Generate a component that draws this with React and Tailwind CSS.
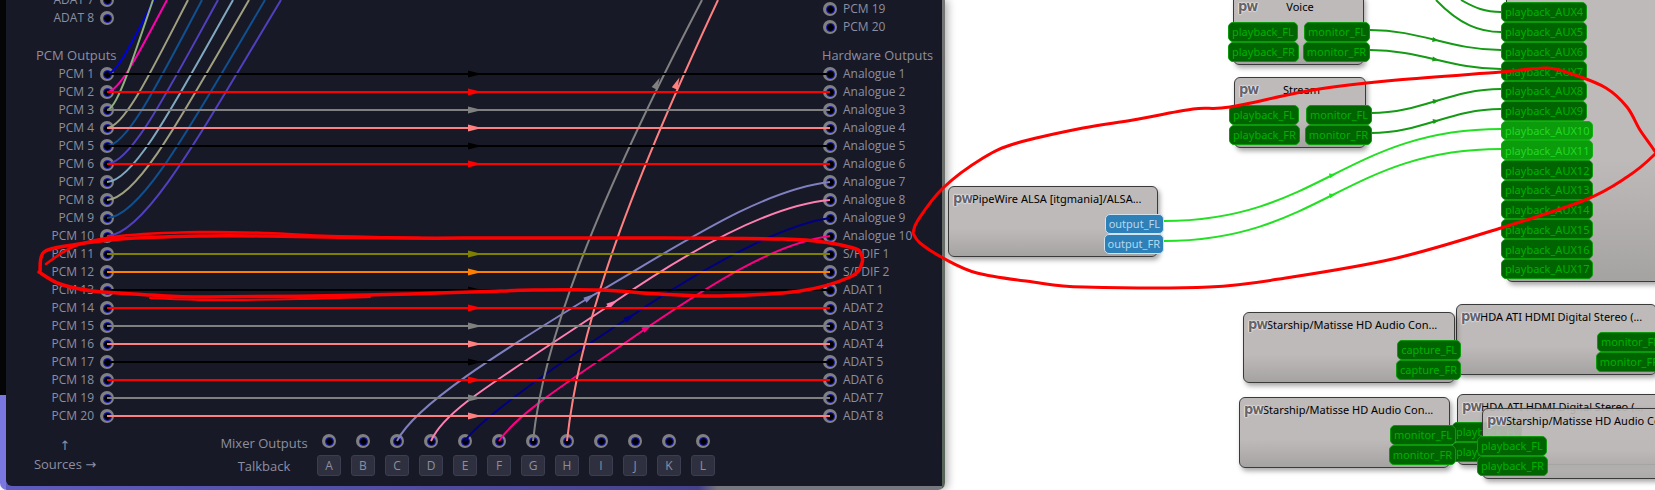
import React from "react";

const FONT = "font-['Open_Sans',sans-serif]";
const NODE_FONT = "font-['Noto_Sans',sans-serif]";

const leftTop = ["ADAT 7", "ADAT 8"];
const pcm = Array.from({ length: 20 }, (_, i) => `PCM ${i + 1}`);
const rightTop = ["PCM 19", "PCM 20"];
const hw = [
  ...Array.from({ length: 10 }, (_, i) => `Analogue ${i + 1}`),
  "S/PDIF 1",
  "S/PDIF 2",
  ...Array.from({ length: 8 }, (_, i) => `ADAT ${i + 1}`),
];
const talkback = ["A", "B", "C", "D", "E", "F", "G", "H", "I", "J", "K", "L"];

// row colours of the straight routes, null where the source goes elsewhere
const straight = [
  "#000000", "#ff0000", "#808080", "#ff8080", "#000000", "#ff0000",
  null, null, null, null,
  "#808000", "#ff8000", "#000000", "#ff0000", "#808080", "#ff8080",
  "#000000", "#ff0000", "#808080", "#ff8080",
];

const pcmCurves = [
  ["#0000e0", 74, 154],
  ["#ff00b0", 92, 167],
  ["#90b080", 110, 153],
  ["#a0a080", 128, 188],
  ["#105090", 146, 202],
  ["#5040c0", 164, 218],
  ["#80a8c0", 182, 233],
  ["#a0a080", 200, 249],
  ["#105090", 218, 265],
  ["#5040c0", 236, 281],
];

const mixerCurves = [
  ["#8080c0", "M397 441C415 405 500 352 590 297C680 245 760 190 830 182", 590, 297, -32],
  ["#ff80b0", "M431 441C445 410 490 385 613 303C690 250 770 205 830 200", 613, 303, -32],
  ["#000080", "M465 441C475 425 540 375 630 317C700 270 780 225 830 218", 630, 317, -33],
  ["#ff0080", "M499 441C520 410 580 375 648 327C710 285 775 243 830 236", 648, 327, -33],
  ["#808080", "M533 441C543 345 590 215 702 0", 657, 83, -63],
  ["#ff8080", "M567 441C578 340 615 220 718 0", 677, 83, -66],
];

const graphWires = [
  ["#149a14", 1370, 30, 1501, 50],
  ["#149a14", 1370, 50, 1501, 69],
  ["#149a14", 1371, 113, 1501, 89],
  ["#149a14", 1371, 133, 1501, 109],
  ["#22e022", 1164, 221, 1501, 129],
  ["#22e022", 1164, 241, 1501, 149],
];

const panelScribble = [
  [40, 272], [44, 252], [73, 245], [120, 239], [200, 236], [267, 236], [400, 238], [500, 238],
  [633, 238], [783, 239], [830, 243], [853, 248], [860, 252], [862, 263], [850, 277], [800, 291],
  [720, 296], [660, 294], [600, 290], [533, 290], [500, 291], [367, 295], [207, 297], [150, 295],
  [93, 291], [60, 284], [39, 272],
];

const panelScribble2 = [
  [46, 264], [75, 246], [120, 236], [200, 232], [267, 233], [330, 236], [420, 238],
];

const panelScribble3 = [
  [150, 298], [210, 300], [300, 299], [370, 297],
];

const graphScribble = [
  [913, 233], [918, 220], [943, 188], [983, 158], [1017, 143], [1083, 128], [1133, 120], [1193, 109],
  [1230, 107], [1313, 90], [1397, 80], [1501, 72], [1547, 68], [1575, 75], [1606, 88], [1627, 107],
  [1640, 130], [1654, 150], [1654, 155], [1627, 177], [1585, 200], [1501, 228], [1397, 258],
  [1292, 277], [1209, 287], [1084, 287], [1033, 282], [977, 273], [943, 258], [920, 243], [913, 233],
];

// catmull-rom through the scribble points
const smooth = (pts) => {
  let d = `M${pts[0][0]} ${pts[0][1]}`;
  for (let i = 0; i < pts.length - 1; i++) {
    const p0 = pts[Math.max(i - 1, 0)];
    const p1 = pts[i];
    const p2 = pts[i + 1];
    const p3 = pts[Math.min(i + 2, pts.length - 1)];
    const c1x = p1[0] + (p2[0] - p0[0]) / 6;
    const c1y = p1[1] + (p2[1] - p0[1]) / 6;
    const c2x = p2[0] - (p3[0] - p1[0]) / 6;
    const c2y = p2[1] - (p3[1] - p1[1]) / 6;
    d += `C${c1x} ${c1y} ${c2x} ${c2y} ${p2[0]} ${p2[1]}`;
  }
  return d;
};

function Jack() {
  return (
    <div className="w-[14px] h-[14px] shrink-0 rounded-full bg-[#808080] flex items-center justify-center">
      <div className="w-[9px] h-[9px] rounded-full bg-black border border-[#1a1ad0]" />
    </div>
  );
}

function LeftRow({ label }) {
  return (
    <div className="h-[18px] flex items-center justify-end gap-[6px]">
      <span className="leading-none">{label}</span>
      <Jack />
    </div>
  );
}

function RightRow({ label }) {
  return (
    <div className="h-[18px] flex items-center gap-[6px]">
      <Jack />
      <span className="leading-none whitespace-nowrap">{label}</span>
    </div>
  );
}

function Panel() {
  return (
    <div className={`flex w-[945px] h-[490px] rounded-b-[7px] overflow-hidden shadow-[3px_0_8px_rgba(0,0,0,0.3)] text-[12px] text-[#8c8fa1] ${FONT}`}>
      <div className="w-[6px] flex flex-col">
        <div className="h-[395px] bg-[#050507]" />
        <div className="flex-1 bg-[#7a78e0]" />
      </div>

      <div className="flex-1 flex flex-col bg-[linear-gradient(to_right,#5f5cc0,#45428c_74%,#77777f_76%)]">
        <div className="h-[486px] bg-[#181926] rounded-bl-[6px]">
          <div className="h-[425px] flex items-start">
            <div className="w-[108px] shrink-0 -mt-[9px]">
              {leftTop.map((l) => (
                <LeftRow key={l} label={l} />
              ))}
              <div className="h-[38px] flex items-end pl-[30px] pb-[1px] whitespace-nowrap text-[13px] leading-[18px]">PCM Outputs</div>
              {pcm.map((l) => (
                <LeftRow key={l} label={l} />
              ))}
            </div>
            <div className="w-[709px] shrink-0" />
            <div className="flex-1">
              {rightTop.map((l) => (
                <RightRow key={l} label={l} />
              ))}
              <div className="h-[29px] flex items-end -ml-[1px] pb-[1px] whitespace-nowrap text-[12.8px] leading-[18px]">Hardware Outputs</div>
              {hw.map((l) => (
                <RightRow key={l} label={l} />
              ))}
            </div>
          </div>

          <div className="pt-[7px] grid grid-cols-[118px_92px_96px_repeat(12,34px)] grid-rows-[18px_21px] gap-y-[5px] items-center">
            <div className="row-span-2 flex flex-col items-center text-[13px] leading-[19px] pt-[1px]">
              <span className="font-['DejaVu_Sans',sans-serif]">↑</span>
              <span className="whitespace-nowrap">
                Sources <span className="font-['DejaVu_Sans',sans-serif]">→</span>
              </span>
            </div>
            <div className="row-span-2" />
            <div className="text-center whitespace-nowrap text-[13px] pt-[6px]">Mixer Outputs</div>
            {talkback.map((t) => (
              <div key={t} className="flex justify-center">
                <Jack />
              </div>
            ))}
            <div className="text-center text-[13px] pt-[2px]">Talkback</div>
            {talkback.map((t) => (
              <div key={t} className="flex justify-center">
                <div className="w-[24px] h-[21px] rounded-[3px] bg-[#2e3040] border border-[#3b3d50] flex items-center justify-center leading-none">
                  {t}
                </div>
              </div>
            ))}
          </div>
        </div>
      </div>

      <div className="w-[3px] bg-[linear-gradient(to_bottom,#757575,#566458)]" />
    </div>
  );
}

function Arrow({ x, y, a, len = 12, wid = 6, color }) {
  return (
    <polygon
      points={`${-len / 2},${-wid / 2} ${len / 2},0 ${-len / 2},${wid / 2}`}
      fill={color}
      transform={`translate(${x} ${y}) rotate(${a})`}
    />
  );
}

function Wires() {
  return (
    <svg className="absolute left-0 top-0" width="1655" height="490" fill="none">
      {pcmCurves.map(([c, y, x1]) => {
        const span = x1 - 107;
        return (
          <path
            key={y}
            d={`M107 ${y}C${107 + span * 0.22} ${y - 1} ${107 + span * 0.55} ${y * 0.55} ${x1} 0`}
            stroke={c}
            strokeWidth="2"
          />
        );
      })}
      {mixerCurves.map(([c, d, x, y, a]) => (
        <g key={d}>
          <path d={d} stroke={c} strokeWidth="2" />
          <Arrow x={x} y={y} a={a} color={c} />
        </g>
      ))}
      {straight.map((c, i) => {
        if (!c) return null;
        const y = 74 + i * 18;
        return (
          <g key={i}>
            <line x1="107" y1={y} x2="830" y2={y} stroke={c} strokeWidth="2" />
            <polygon points={`468,${y - 3.5} 482,${y} 468,${y + 3.5}`} fill={c} />
          </g>
        );
      })}

      <path d="M1436 0C1460 25 1480 32 1501 32" stroke="#149a14" strokeWidth="2" />
      <path d="M1461 0C1475 8 1485 12 1501 12" stroke="#149a14" strokeWidth="2" />
      {graphWires.map(([c, x0, y0, x1, y1]) => {
        const xm = (x0 + x1) / 2;
        const ang = (Math.atan2(y1 - y0, x1 - x0) * 180) / Math.PI;
        return (
          <g key={`${x0}-${y0}`}>
            <path d={`M${x0} ${y0}C${xm - 15} ${y0} ${xm + 15} ${y1} ${x1} ${y1}`} stroke={c} strokeWidth="2" />
            <Arrow x={xm} y={(y0 + y1) / 2} a={ang} len={6} wid={5} color={c} />
          </g>
        );
      })}
    </svg>
  );
}

function Port({ label, kind }) {
  const styles = {
    green: "bg-[#006400] border-[#0a9a0a] text-[#00b000]",
    hot: "bg-[#0a9c0a] border-[#10b010] text-[#22d822]",
    blue: "bg-[#2e80b8] border-[#cfe2ee] text-[#b4d8ee]",
  };
  return (
    <div className={`h-[19.77px] px-[3px] rounded-[5px] border flex items-center justify-center text-[11px] leading-none whitespace-nowrap ${styles[kind]}`}>
      {label}
    </div>
  );
}

function Node({ x, y, w, h, title, center, alpha, left = [], right = [], hot = [], kind = "green" }) {
  return (
    <div
      className={`absolute flex flex-col rounded-[6px] border border-[#3a3a3a] shadow-[2px_3px_5px_rgba(0,0,0,0.35)] ${NODE_FONT} ${alpha ? "bg-[linear-gradient(to_bottom,rgba(190,186,185,0.9)_60%,rgba(165,163,162,0.92))]" : "bg-[linear-gradient(to_bottom,#bebab9_60%,#a5a3a2)]"}`}
      style={{ left: x, top: y, width: w, height: h }}
    >
      <div className="flex items-center h-[23px] pl-[4px] text-[11px] leading-none text-black whitespace-nowrap">
        <span className="font-['DejaVu_Sans',sans-serif] font-bold text-[13px] leading-none w-[19px] shrink-0 scale-y-110 -tracking-[1px] text-[#66646a] [text-shadow:0_0_2px_#fff,0_0_1px_#fff,0_0_1px_#fff]">pw</span>
        {center ? <span className="flex-1 text-center pr-[20px]">{title}</span> : <span>{title}</span>}
      </div>
      <div className="flex justify-between -ml-[6px] -mr-[7px] pt-[4px]">
        <div className="flex flex-col items-start">
          {left.map((l) => (
            <Port key={l} label={l} kind={hot.includes(l) ? "hot" : kind} />
          ))}
        </div>
        <div className="flex flex-col items-end">
          {right.map((l) => (
            <Port key={l} label={l} kind={hot.includes(l) ? "hot" : kind} />
          ))}
        </div>
      </div>
    </div>
  );
}

function Graph() {
  const aux = Array.from({ length: 14 }, (_, i) => `playback_AUX${i + 4}`);
  const playback = ["playback_FL", "playback_FR"];
  const monitor = ["monitor_FL", "monitor_FR"];
  return (
    <>
      <Node x={1233} y={-6} w={131} h={71} title="Voice" center left={playback} right={monitor} />
      <Node x={1234} y={77} w={132} h={71} title="Stream" center left={playback} right={monitor} />
      <Node x={1506} y={-26} w={200} h={308} title="" left={aux} hot={["playback_AUX10", "playback_AUX11"]} />
      <Node x={948} y={186} w={210} h={71} title="PipeWire ALSA [itgmania]/ALSA..." right={["output_FL", "output_FR"]} kind="blue" />
      <Node x={1456} y={304} w={201} h={71} title="HDA ATI HDMI Digital Stereo (..." right={monitor} />
      <Node x={1243} y={312} w={212} h={71} title="Starship/Matisse HD Audio Con..." right={["capture_FL", "capture_FR"]} />
      <Node x={1457} y={394} w={240} h={71} title="HDA ATI HDMI Digital Stereo (..." left={playback} />
      <Node x={1239} y={397} w={211} h={71} title="Starship/Matisse HD Audio Con..." right={monitor} />
      <Node x={1482} y={408} w={240} h={71} title="Starship/Matisse HD Audio Con..." alpha left={playback} />
    </>
  );
}

function Scribbles() {
  const common = { stroke: "#ff0000", strokeLinejoin: "round", strokeLinecap: "round" };
  return (
    <svg className="absolute left-0 top-0" width="1655" height="490" fill="none">
      <path d={smooth(panelScribble)} strokeWidth="3.5" {...common} />
      <path d={smooth(panelScribble2)} strokeWidth="2.5" {...common} />
      <path d={smooth(panelScribble3)} strokeWidth="2" {...common} />
      <path d={smooth(graphScribble)} strokeWidth="3" {...common} />
    </svg>
  );
}

export default function App() {
  return (
    <div className="relative w-[1655px] h-[490px] overflow-hidden bg-white">
      <Panel />
      <Wires />
      <Graph />
      <Scribbles />
    </div>
  );
}
